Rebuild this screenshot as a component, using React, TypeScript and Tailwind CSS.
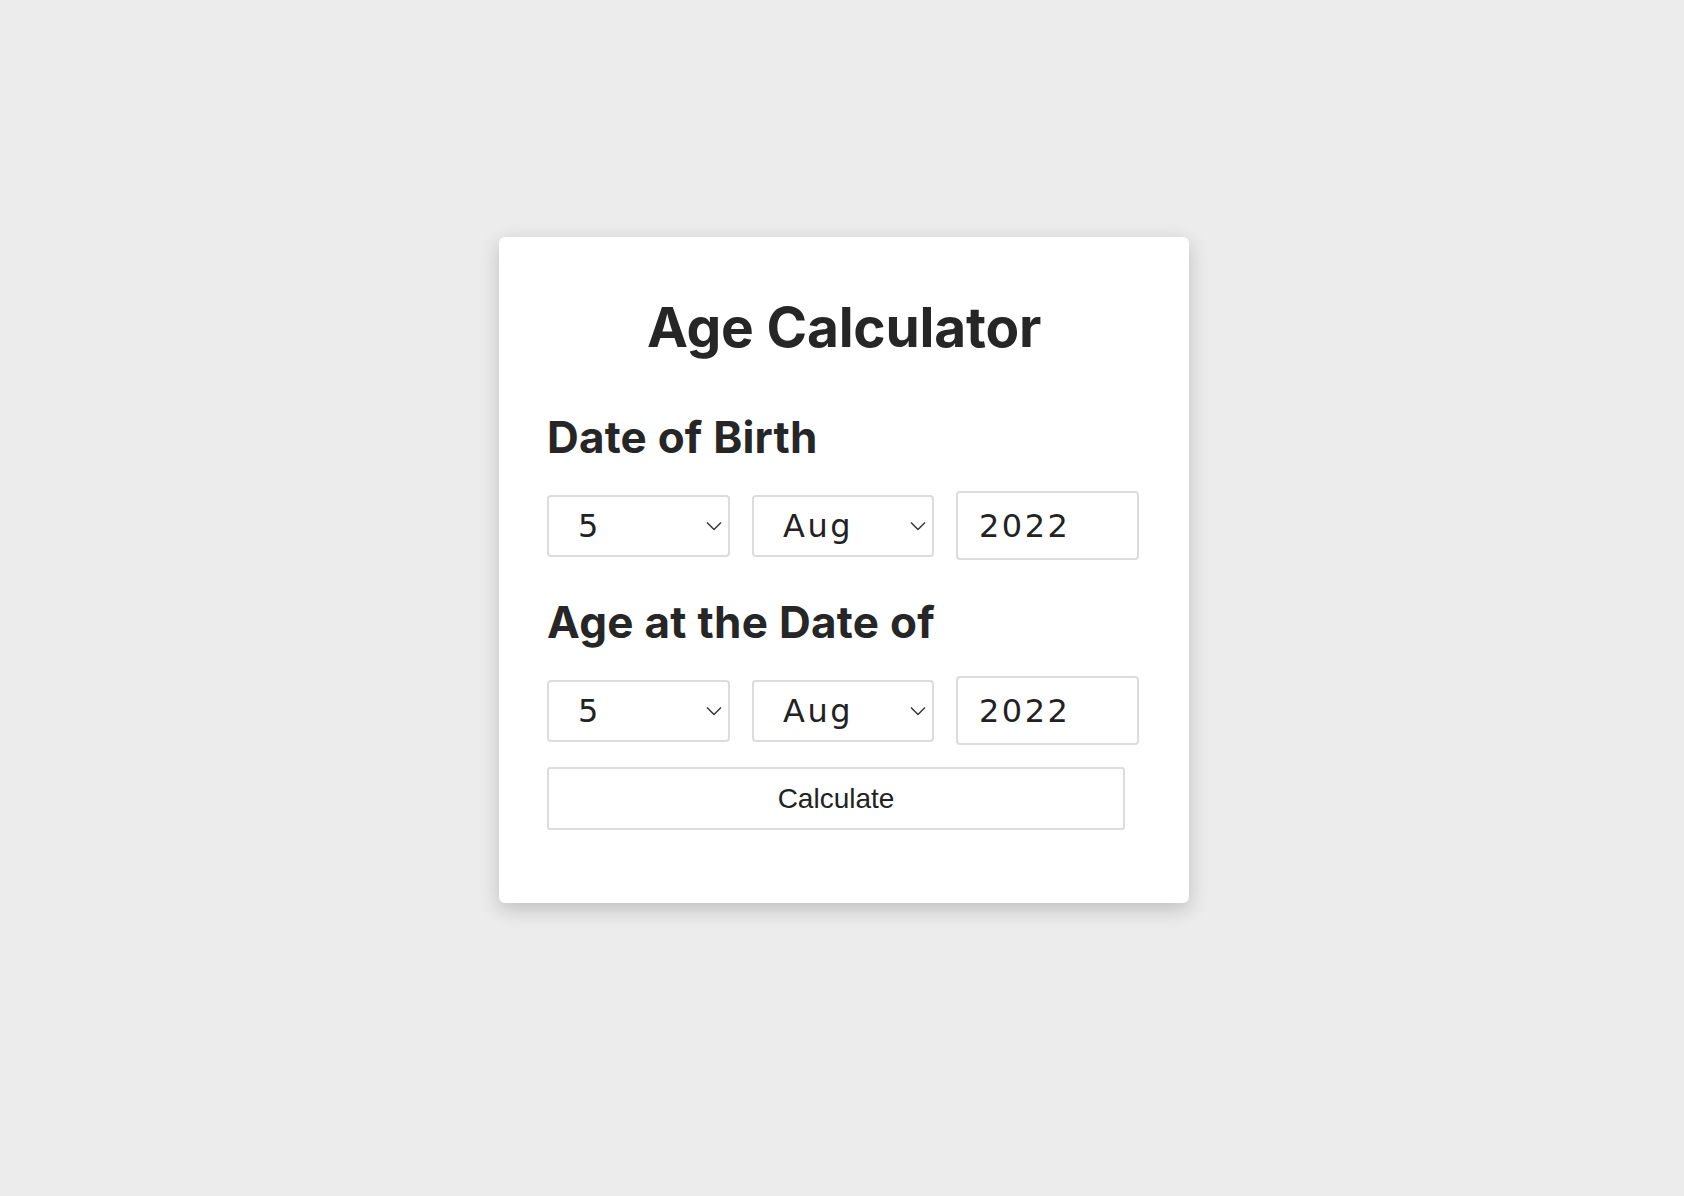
import { useState } from "react";

const days = Array.from({ length: 31 }, (_, i) => String(i + 1));
const months = ["Jan", "Feb", "Mar", "Apr", "May", "Jun", "Jul", "Aug", "Sep", "Oct", "Nov", "Dec"];

interface DateRowProps {
  day: string;
  month: string;
  year: string;
  onDay: (v: string) => void;
  onMonth: (v: string) => void;
  onYear: (v: string) => void;
}

const Chevron = () => (
  <svg
    className="pointer-events-none absolute right-[8px] top-1/2 -translate-y-1/2 text-[#333]"
    width="16"
    height="9"
    viewBox="0 0 16 9"
    fill="none"
  >
    <path d="M1 1L8 8L15 1" stroke="currentColor" strokeWidth="1.4" />
  </svg>
);

const DateRow = ({ day, month, year, onDay, onMonth, onYear }: DateRowProps) => (
  <div className="flex items-center gap-[22px]">
    <div className="relative">
      <select
        value={day}
        onChange={(e) => onDay(e.target.value)}
        className="h-[62px] w-[183px] appearance-none rounded-[4px] border-2 border-[#dcdcdc] bg-white pl-[29px] font-['DejaVu_Sans',sans-serif] text-[32px] tracking-[2.5px] text-[#222] outline-none"
      >
        {days.map((d) => (
          <option key={d}>{d}</option>
        ))}
      </select>
      <Chevron />
    </div>
    <div className="relative">
      <select
        value={month}
        onChange={(e) => onMonth(e.target.value)}
        className="h-[62px] w-[182px] appearance-none rounded-[4px] border-2 border-[#dcdcdc] bg-white pl-[29px] font-['DejaVu_Sans',sans-serif] text-[32px] tracking-[2.5px] text-[#222] outline-none"
      >
        {months.map((m) => (
          <option key={m}>{m}</option>
        ))}
      </select>
      <Chevron />
    </div>
    <input
      type="text"
      value={year}
      onChange={(e) => onYear(e.target.value)}
      className="h-[69px] w-[183px] rounded-[4px] border-2 border-[#dcdcdc] bg-white px-[21px] font-['DejaVu_Sans',sans-serif] text-[32px] tracking-[2.5px] text-[#222] outline-none"
    />
  </div>
);

export default function App() {
  const [birth, setBirth] = useState({ day: "5", month: "Aug", year: "2022" });
  const [at, setAt] = useState({ day: "5", month: "Aug", year: "2022" });

  return (
    <div className="min-h-screen bg-[#ececec] pt-[237px] pl-[4px] font-['Inter',sans-serif] text-[#262626]">
      <div className="mx-auto w-[690px] rounded-[6px] bg-white px-[48px] pt-[58px] pb-[73px] shadow-[0_6px_20px_rgba(0,0,0,0.2)]">
        <h1 className="text-center text-[55px] font-bold leading-[64px] tracking-[-0.2px]">Age Calculator</h1>

        <h2 className="mt-[52px] text-[44px] font-bold leading-[52px] tracking-[0.2px]">Date of Birth</h2>
        <div className="mt-[28px]">
          <DateRow
            {...birth}
            onDay={(v) => setBirth({ ...birth, day: v })}
            onMonth={(v) => setBirth({ ...birth, month: v })}
            onYear={(v) => setBirth({ ...birth, year: v })}
          />
        </div>

        <h2 className="mt-[36px] text-[44px] font-bold leading-[52px] tracking-[0.3px]">Age at the Date of</h2>
        <div className="mt-[28px]">
          <DateRow
            {...at}
            onDay={(v) => setAt({ ...at, day: v })}
            onMonth={(v) => setAt({ ...at, month: v })}
            onYear={(v) => setAt({ ...at, year: v })}
          />
        </div>

        <button className="mt-[22px] block h-[63px] w-[578px] rounded-[3px] border-2 border-[#dcdcdc] bg-white font-['Liberation_Sans',Arial,sans-serif] text-[28px] text-[#222]">
          Calculate
        </button>
      </div>
    </div>
  );
}
